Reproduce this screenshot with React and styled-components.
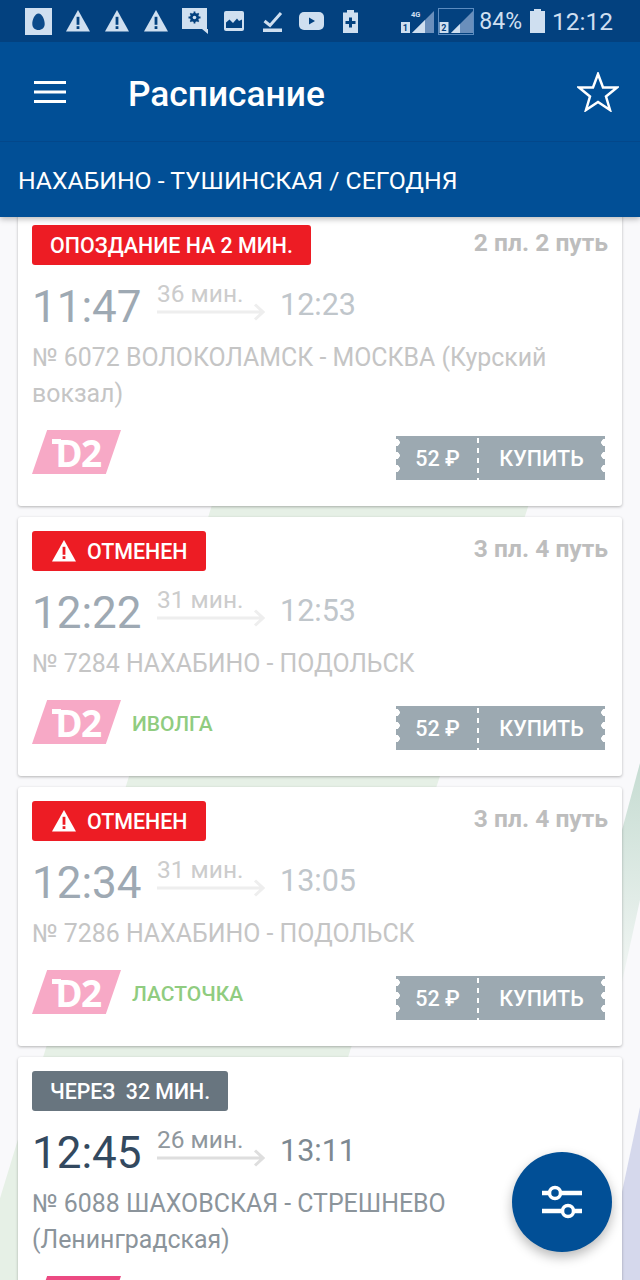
import React from 'react';
import styled, { createGlobalStyle } from 'styled-components';

const Global = createGlobalStyle`
  html, body { margin: 0; padding: 0; }
  body { font-family: Roboto, "Liberation Sans", sans-serif; background: #f8f8fa; }
  * { box-sizing: border-box; }
`;

const Screen = styled.div`
  position: relative;
  width: 640px;
  height: 1280px;
  overflow: hidden;
  background: #f9f9fb;
`;
const Backdrop = styled.svg`
  position: absolute;
  inset: 0;
`;
const Header = styled.header`
  position: relative;
  z-index: 2;
  box-shadow: 0 2px 6px rgba(0, 0, 0, 0.28);
`;
const StatusBar = styled.div`
  height: 42px;
  background: #03417f;
  display: flex;
  align-items: center;
  padding-left: 19px;
  color: #cfdff0;
`;
const Slot = styled.div`
  width: 39px;
  height: 42px;
  display: flex;
  align-items: center;
  justify-content: center;
  flex: none;
`;
const StatusRight = styled.div`
  margin-left: auto;
  display: flex;
  align-items: center;
  padding-right: 27px;
`;
const SimGap = styled.span`
  width: 3px;
`;
const Percent = styled.span`
  font-size: 23px;
  margin-left: 5px;
  margin-right: 8px;
`;
const Clock = styled.span`
  font-size: 24.5px;
  margin-left: 7px;
`;
const AppBar = styled.div`
  height: 100px;
  background: #014f96;
  display: flex;
  align-items: center;
  padding: 0 21px 0 34px;
  color: #fff;
  border-bottom: 1px solid #03478a;
`;
const Title = styled.h1`
  margin: 4px 0 0 62px;
  font-size: 35.3px;
  font-weight: 500;
  flex: 1;
`;
const SubBar = styled.div`
  height: 75px;
  background: #014f96;
  display: flex;
  align-items: center;
  padding: 2px 0 0 18px;
  color: #fff;
  font-size: 24.75px;
`;
const List = styled.main`
  position: relative;
  z-index: 1;
  margin-top: -6px;
  padding: 0 18px;
  display: flex;
  flex-direction: column;
  gap: 11px;
`;
const Card = styled.article`
  background: #fff;
  border-radius: 3px;
  padding: 14px 14px 26px;
  box-shadow: 0 1px 3px rgba(0, 0, 0, 0.28);
`;
const TopRow = styled.div`
  display: flex;
  justify-content: space-between;
  align-items: flex-start;
`;
const Badge = styled.div`
  height: 40px;
  display: inline-flex;
  align-items: center;
  gap: 11px;
  padding: 0 18px;
  border-radius: 3px;
  color: #fff;
  font-size: ${p => (p.$tone === 'gray' ? '21.3px' : '21.4px')};
  font-weight: 500;
  white-space: pre;
  background: ${p => (p.$tone === 'gray' ? '#68757f' : '#ed1c24')};
`;
const BadgeIcon = styled.span`
  display: flex;
  margin-left: 2px;
`;
const Platform = styled.div`
  font-size: 24.6px;
  font-weight: 700;
  color: #bdbdbd;
  line-height: 28px;
  margin-top: 4px;
`;
const TimeRow = styled.div`
  display: flex;
  align-items: flex-start;
  height: 64px;
  margin-top: 11px;
`;
const Depart = styled.div`
  font-size: 44px;
  line-height: 63px;
  width: 125px;
  color: ${p => (p.$dim ? '#9ea9b3' : '#33495f')};
`;
const Duration = styled.div`
  width: 123px;
  padding-top: 4px;
  font-size: 24.5px;
  line-height: 28px;
  color: ${p => (p.$dim ? '#cccccc' : '#8f979d')};
`;
const Arrow = styled.svg`
  display: block;
  margin-top: -5px;
`;
const Arrive = styled.div`
  font-size: 30.5px;
  line-height: 34px;
  margin-top: 12px;
  color: ${p => (p.$dim ? '#c0c6cb' : '#7d8992')};
`;
const Route = styled.div`
  font-size: 24.9px;
  line-height: 36px;
  color: ${p => (p.$dim ? '#c5c5c5' : '#8b949b')};
`;
const BottomRow = styled.div`
  display: flex;
  align-items: flex-start;
  margin-top: 18px;
  height: 50px;
`;
const Logo = styled.div`
  position: relative;
  width: 89px;
  height: 44px;
  flex: none;
  display: flex;
  align-items: center;
  justify-content: center;
  clip-path: polygon(17% 0, 100% 0, 83% 100%, 0 100%);
  color: #fff;
  font-family: "Open Sans", sans-serif;
  font-weight: 700;
  font-size: 37px;
  letter-spacing: -1.5px;
  padding-left: 3px;
  background: ${p => (p.$dim ? '#f7a9c6' : '#ec4a82')};
  &::before {
    content: '';
    position: absolute;
    left: 20px;
    top: 9px;
    width: 9px;
    height: 5px;
    background: #fff;
  }
`;
const TrainType = styled.div`
  margin-left: 11px;
  margin-top: 12px;
  font-size: 21px;
  font-weight: 500;
  line-height: 24px;
  color: #90cc80;
`;
const Ticket = styled.div`
  position: relative;
  margin-left: auto;
  margin-top: 6px;
  margin-right: 3px;
  width: 209px;
  height: 44px;
  display: flex;
  align-items: center;
  background: #9ca9b1;
  color: #fff;
  font-size: 21.5px;
  font-weight: 500;
  &::before, &::after {
    content: '';
    position: absolute;
    top: 0;
    bottom: 5px;
    width: 4px;
    background: radial-gradient(circle at var(--cx) 50%, #fff 3.5px, transparent 4px) 0 0 / 4px 13px repeat-y;
  }
  &::before { left: 0; --cx: 0; }
  &::after { right: 0; --cx: 4px; }
`;
const Price = styled.div`
  width: 83px;
  height: 100%;
  flex: none;
  display: flex;
  align-items: center;
  justify-content: center;
  background: repeating-linear-gradient(#fff 0 5px, transparent 5px 10px) right 0 top 2px / 2px 100% no-repeat;
`;
const Buy = styled.div`
  flex: 1;
  text-align: center;
  padding-right: 1px;
`;
const Fab = styled.button`
  position: absolute;
  z-index: 3;
  left: 512px;
  top: 1152px;
  width: 100px;
  height: 100px;
  border: 0;
  border-radius: 50%;
  padding: 0;
  background: #014f96;
  display: flex;
  align-items: center;
  justify-content: center;
  box-shadow: 0 5px 12px rgba(0, 0, 0, 0.28);
`;

const Warn = ({ s = 24, fg = '#cfdff0', mark = '#03417f' }) => (
  <svg width={s} height={s * 0.9} viewBox="0 0 24 21.6">
    <path d="M12 0 L24 21.6 H0 Z" fill={fg} />
    <rect x="10.6" y="6.8" width="2.8" height="8" fill={mark} />
    <rect x="10.6" y="16.2" width="2.8" height="2.8" fill={mark} />
  </svg>
);

const statusIcons = [
  <svg width="27" height="27" viewBox="0 0 27 27" key="a"><rect width="27" height="27" fill="#cfdff0" /><path d="M13.5 5.5c3.6 0 6.2 6 6.2 10.4 0 3.8-2.7 6-6.2 6s-6.2-2.2-6.2-6C7.300 11.500 9.900 5.500 13.500 5.500z" fill="#0b4a8a" /></svg>,
  <Warn key="b" />, <Warn key="c" />, <Warn key="d" />,
  <svg width="26" height="26" viewBox="0 0 26 26" key="e"><path d="M0 0H25V21H26V26L20 21H0Z" fill="#cfdff0" /><path d="M12.500 3.500v12M6.500 9.500h12M8.300 5.300l8.400 8.400M16.700 5.300l-8.400 8.400" stroke="#03417f" strokeWidth="1.800" /><circle cx="12.500" cy="9.500" r="4.500" fill="#03417f" /><circle cx="12.500" cy="9.500" r="1.800" fill="#cfdff0" /></svg>,
  <svg width="20" height="20" viewBox="0 0 20 20" key="f"><rect width="20" height="20" rx="2" fill="#cfdff0" /><path d="M2 17V11.500L5.500 8.500 9 12 13 7.500 15 10 18 8.500V17Z" fill="#03417f" /></svg>,
  <svg width="20" height="22" viewBox="0 0 20 22" key="g"><path d="M1.500 11L7 15.500 18 3" fill="none" stroke="#cfdff0" strokeWidth="3" /><rect y="18.500" width="19" height="3.500" fill="#cfdff0" /></svg>,
  <svg width="25" height="18" viewBox="0 0 25 18" key="h"><rect width="25" height="18" rx="5" fill="#cfdff0" /><path d="M10 5.500L16 9 10 12.500Z" fill="#03417f" /></svg>,
  <svg width="15" height="23" viewBox="0 0 15 23" key="i"><path d="M4 0H11V2.500H15V23H0V2.500H4Z" fill="#cfdff0" /><path d="M6 7.500H9V11H12.500V14H9V17.500H6V14H2.500V11H6Z" fill="#03417f" /></svg>,
];

const Sim = ({ n, tag, framed }) => (
  <svg width={framed ? 36 : 34} height={27} viewBox={framed ? '0 0 36 27' : '0 0 34 27'}>
    {framed && <rect x="0.500" y="0.500" width="35" height="26" fill="none" stroke="#5c8cc0" />}
    <path d={framed ? 'M35 3V25H13Z' : 'M33 3V25H11Z'} fill="#6a8fbc" />
    <path d={framed ? 'M13 25L22 16V25Z' : 'M11 25L24 12V25Z'} fill="#cfdff0" />
    {tag && <text x="10" y="9" fontSize="7.500" fontWeight="700" fill="#cfdff0" fontFamily="Roboto">{tag}</text>}
    <rect x={framed ? 1.500 : 0} y="14" width="9" height="11" fill="#cfdff0" />
    <text x={framed ? 3.200 : 1.700} y="23" fontSize="9" fontWeight="700" fill="#03417f" fontFamily="Roboto">{n}</text>
  </svg>
);

const trains = [
  { badge: 'ОПОЗДАНИЕ НА 2 МИН.', tone: 'red', plat: '2 пл. 2 путь', dep: '11:47', dur: '36 мин.', arr: '12:23', route: '№ 6072 ВОЛОКОЛАМСК - МОСКВА (Курский вокзал)', dim: true },
  { badge: 'ОТМЕНЕН', warn: true, tone: 'red', plat: '3 пл. 4 путь', dep: '12:22', dur: '31 мин.', arr: '12:53', route: '№ 7284 НАХАБИНО - ПОДОЛЬСК', type: 'ИВОЛГА', dim: true },
  { badge: 'ОТМЕНЕН', warn: true, tone: 'red', plat: '3 пл. 4 путь', dep: '12:34', dur: '31 мин.', arr: '13:05', route: '№ 7286 НАХАБИНО - ПОДОЛЬСК', type: 'ЛАСТОЧКА', dim: true },
  { badge: 'ЧЕРЕЗ  32 МИН.', tone: 'gray', plat: '', dep: '12:45', dur: '26 мин.', arr: '13:11', route: '№ 6088 ШАХОВСКАЯ - СТРЕШНЕВО (Ленинградская)', dim: false },
];

export default function App() {
  return (
    <Screen>
      <Global />
      <Backdrop width="640" height="1280" viewBox="0 0 640 1280">
        <defs>
          <linearGradient id="fade" x1="0" y1="0" x2="0" y2="1">
            <stop offset="0" stopColor="#c6dcd2" />
            <stop offset="1" stopColor="#f2f6f4" />
          </linearGradient>
        </defs>
        <path d="M244 400H563L350 1051 280 1280H-25L45 1051Z" fill="#e6f0e6" />
        <path d="M640 763L622 830V982L640 900Z" fill="url(#fade)" />
        <path d="M640 1107V1280H622V1192Z" fill="#d5d8ec" />
      </Backdrop>
      <Header>
        <StatusBar>
          {statusIcons.map((icon, i) => <Slot key={i}>{icon}</Slot>)}
          <StatusRight>
            <Sim n="1" tag="4G" />
            <SimGap />
            <Sim n="2" framed />
            <Percent>84%</Percent>
            <svg width="15" height="24" viewBox="0 0 15 24"><path d="M4 0H11V2H15V24H0V2H4Z" fill="#cfdff0" /></svg>
            <Clock>12:12</Clock>
          </StatusRight>
        </StatusBar>
        <AppBar>
          <svg width="32" height="22" viewBox="0 0 32 22"><path d="M0 1.500H32M0 11H32M0 20.500H32" stroke="#fff" strokeWidth="3" /></svg>
          <Title>Расписание</Title>
          <svg width="42" height="40" viewBox="0 0 42 40"><path d="M21 2L26 15.500H40L29 24.500 33 38 21 30 9 38 13 24.500 2 15.500H16Z" fill="none" stroke="#fff" strokeWidth="2.500" strokeLinejoin="miter" /></svg>
        </AppBar>
        <SubBar>НАХАБИНО - ТУШИНСКАЯ / СЕГОДНЯ</SubBar>
      </Header>
      <List>
        {trains.map(t => (
          <Card key={t.dep}>
            <TopRow>
              <Badge $tone={t.tone}>
                {t.warn && <BadgeIcon><Warn s={24} fg="#fff" mark="#ed1c24" /></BadgeIcon>}
                {t.badge}
              </Badge>
              <Platform>{t.plat}</Platform>
            </TopRow>
            <TimeRow>
              <Depart $dim={t.dim}>{t.dep}</Depart>
              <Duration $dim={t.dim}>
                {t.dur}
                <Arrow width="108" height="18" viewBox="0 0 108 18">
                  <path d="M0 9H106M98 1.500L106 9 98 16.500" fill="none" stroke={t.dim ? '#eeeeee' : '#dedede'} strokeWidth="3" />
                </Arrow>
              </Duration>
              <Arrive $dim={t.dim}>{t.arr}</Arrive>
            </TimeRow>
            <Route $dim={t.dim}>{t.route}</Route>
            <BottomRow>
              <Logo $dim={t.dim}>D2</Logo>
              {t.type && <TrainType>{t.type}</TrainType>}
              <Ticket>
                <Price>52 ₽</Price>
                <Buy>КУПИТЬ</Buy>
              </Ticket>
            </BottomRow>
          </Card>
        ))}
      </List>
      <Fab aria-label="Фильтр">
        <svg width="42" height="34" viewBox="0 0 42 34">
          <path d="M1 8H41M1 26H41" stroke="#fff" strokeWidth="4.500" />
          <circle cx="14" cy="8" r="5.500" fill="#014f96" stroke="#fff" strokeWidth="3.500" />
          <circle cx="27" cy="26" r="5.500" fill="#014f96" stroke="#fff" strokeWidth="3.500" />
        </svg>
      </Fab>
    </Screen>
  );
}
